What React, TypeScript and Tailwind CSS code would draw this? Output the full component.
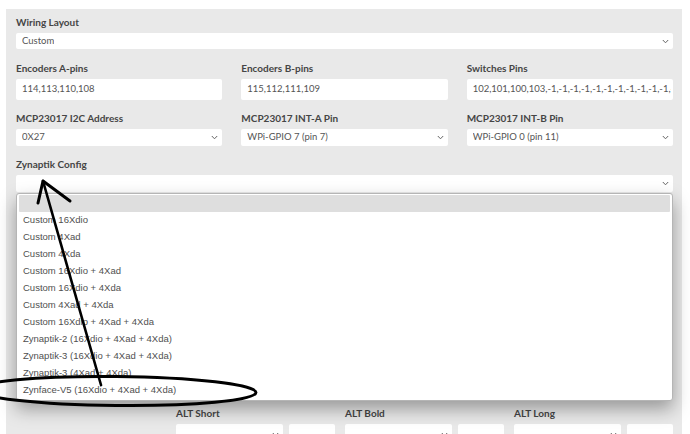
import React from "react";

const lato = { fontFamily: "Lato, 'Open Sans', sans-serif" };

function Chevron() {
  return (
    <svg width="7" height="5" viewBox="0 0 7 5" className="shrink-0">
      <path d="M0.8 1 L3.5 3.8 L6.2 1" fill="none" stroke="#666" strokeWidth="1" />
    </svg>
  );
}

function Label({ children }: { children: React.ReactNode }) {
  return (
    <div className="h-[12px] mb-[5px] text-[10px] leading-[12px] font-bold text-[#454545]" style={lato}>
      {children}
    </div>
  );
}

function Select({ value = "", h = "h-[17px]" }: { value?: string; h?: string }) {
  return (
    <div className={`${h} bg-white rounded-[2px] flex items-center justify-between pl-[6px] pr-[4px] text-[9.5px] text-[#555]`} style={lato}>
      <span className="truncate">{value}</span>
      <Chevron />
    </div>
  );
}

function Input({ value = "" }: { value?: string }) {
  return (
    <div className="h-[21px] bg-white rounded-[2px] flex items-center pl-[6px] pr-[2px] text-[9.5px] text-[#555] overflow-hidden whitespace-nowrap" style={lato}>
      <span className="block overflow-hidden">{value}</span>
    </div>
  );
}

const items = [
  "Custom 16Xdio",
  "Custom 4Xad",
  "Custom 4Xda",
  "Custom 16Xdio + 4Xad",
  "Custom 16Xdio + 4Xda",
  "Custom 4Xad + 4Xda",
  "Custom 16Xdio + 4Xad + 4Xda",
  "Zynaptik-2 (16Xdio + 4Xad + 4Xda)",
  "Zynaptik-3 (16Xdio + 4Xad + 4Xda)",
  "Zynaptik-3 (4Xad + 4Xda)",
  "Zynface-V5 (16Xdio + 4Xad + 4Xda)",
];

export default function App() {
  return (
    <div className="relative w-[690px] h-[434px] bg-white overflow-hidden">
      <div className="ml-[6px] mt-[9px] w-[676px] h-[500px] bg-[#e9e9e9] pl-[10px] pr-[9px] pt-[7px]">
        <Label>Wiring Layout</Label>
        <Select value="Custom" h="h-[16px]" />

        <div className="grid grid-cols-3 gap-x-[19px] mt-[13px]">
          <div>
            <Label>Encoders A-pins</Label>
            <Input value="114,113,110,108" />
          </div>
          <div>
            <Label>Encoders B-pins</Label>
            <Input value="115,112,111,109" />
          </div>
          <div>
            <Label>Switches Pins</Label>
            <Input value="102,101,100,103,-1,-1,-1,-1,-1,-1,-1,-1,-1,-1,-1,-1" />
          </div>
        </div>

        <div className="grid grid-cols-3 gap-x-[19px] mt-[12px]">
          <div>
            <Label>MCP23017 I2C Address</Label>
            <Select value="0X27" />
          </div>
          <div>
            <Label>MCP23017 INT-A Pin</Label>
            <Select value="WPi-GPIO 7 (pin 7)" />
          </div>
          <div>
            <Label>MCP23017 INT-B Pin</Label>
            <Select value="WPi-GPIO 0 (pin 11)" />
          </div>
        </div>

        <div className="relative mt-[12px]">
          <Label>Zynaptik Config</Label>
          <Select value="" />
          <div className="absolute left-0 right-0 top-[35px] z-10 h-[208px] bg-white border border-[#b5b5b5] rounded-[3px] shadow-[0_8px_18px_rgba(0,0,0,0.35)] px-[2px] pt-[1px]"
            style={{ fontFamily: "'Liberation Sans', Arial, sans-serif" }}>
            <div className="h-[17px] bg-[#dedede] rounded-[1px]" />
            {items.map((t) => (
              <div key={t} className="h-[17px] flex items-center pl-[4px] text-[9.5px] text-[#505050]">
                {t}
              </div>
            ))}
          </div>
        </div>

        <div className="h-[215px]" />

        <div className="grid grid-cols-[150px_1fr_1fr_1fr] gap-x-[10px]">
          <div />
          {["ALT Short", "ALT Bold", "ALT Long"].map((l) => (
            <div key={l}>
              <Label>{l}</Label>
              <div className="flex gap-[6px]">
                <div className="flex-1"><Select value="" h="h-[20px]" /></div>
                <div className="w-[46px] h-[20px] bg-white rounded-[2px]" />
              </div>
            </div>
          ))}
        </div>
      </div>

      <svg className="absolute inset-0 pointer-events-none z-20" width="690" height="434" viewBox="0 0 690 434">
        <path d="M101 385 L43 181" stroke="#000" strokeWidth="2.6" fill="none" strokeLinecap="round" />
        <path d="M38 203 L43 181 L70 201" stroke="#000" strokeWidth="3" fill="none" strokeLinecap="round" strokeLinejoin="round" />
        <ellipse cx="116" cy="391" rx="140" ry="14.5" stroke="#000" strokeWidth="3" fill="none" transform="rotate(0.6 116 391)" />
      </svg>
    </div>
  );
}
